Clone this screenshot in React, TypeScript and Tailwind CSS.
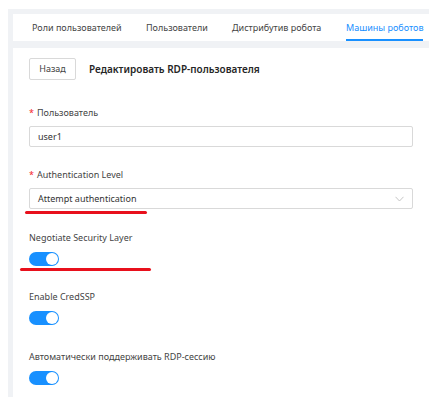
import React from "react";

const tabs = [
  { name: "Роли пользователей", w: "w-[114px]" },
  { name: "Пользователи", w: "w-[86px]" },
  { name: "Дистрибутив робота", w: "w-[114px]" },
  { name: "Машины роботов", w: "" },
];

const Toggle = () => (
  <div className="relative h-[14px] w-[30px] rounded-full bg-[#1890ff]">
    <span className="absolute right-[1px] top-[1px] h-[12px] w-[12px] rounded-full bg-white" />
  </div>
);

const Label = ({ text, required }: { text: string; required?: boolean }) => (
  <div className="flex h-[14px] items-center text-[9px] leading-[14px] text-[#444]">
    {required && <span className="mr-[3px] text-[#f5222d]">*</span>}
    {text}
  </div>
);

export default function App() {
  return (
    <div
      className="relative h-[409px] w-[444px] bg-white pl-[8px] pt-[9px]"
      style={{ fontFamily: '"Noto Sans", "Open Sans", sans-serif' }}
    >
      <div className="flex h-[388px] w-[421px] flex-col bg-[#f0f2f5] pl-[5px] pt-[5px]">
        <div className="flex h-[27px] items-stretch bg-white pl-[19px] text-[9px] text-[#444]">
          {tabs.map((t, i) => (
            <div key={t.name} className={`flex items-center ${t.w}`}>
              <span
                className={`relative flex h-full items-center whitespace-nowrap ${
                  i === 3 ? "text-[#1890ff]" : ""
                }`}
              >
                {t.name}
                {i === 3 && <span className="absolute bottom-0 left-0 right-0 h-[2px] bg-[#1890ff]" />}
              </span>
            </div>
          ))}
        </div>

        <div className="mt-[7px] flex-1 bg-white px-[16px] pt-[10px]">
          <div className="flex items-center">
            <button className="h-[22px] w-[47px] rounded-[2px] border border-[#d9d9d9] bg-white text-[9px] text-[#444]">
              Назад
            </button>
            <span className="ml-[13px] text-[10px] font-semibold text-[#262626]">Редактировать RDP-пользователя</span>
          </div>

          <div className="mt-[26px]">
            <Label text="Пользователь" required />
            <div className="mt-[6px] flex h-[21px] items-center rounded-[2px] border border-[#d9d9d9] px-[8px] text-[9px] text-[#333]">
              user1
            </div>
          </div>

          <div className="mt-[21px]">
            <Label text="Authentication Level" required />
            <div className="mt-[6px] flex h-[21px] items-center justify-between rounded-[2px] border border-[#d9d9d9] pl-[8px] pr-[8px] text-[9px] text-[#333]">
              <span>Attempt authentication</span>
              <svg width="9" height="6" viewBox="0 0 9 6" fill="none">
                <path d="M0.5 0.8 L4.5 5 L8.5 0.8" stroke="#c0c0c0" strokeWidth="0.9" />
              </svg>
            </div>
          </div>

          <div className="mt-[22px]">
            <Label text="Negotiate Security Layer" />
            <div className="mt-[7px]">
              <Toggle />
            </div>
          </div>

          <div className="mt-[24px]">
            <Label text="Enable CredSSP" />
            <div className="mt-[7px]">
              <Toggle />
            </div>
          </div>

          <div className="mt-[25px]">
            <Label text="Автоматически поддерживать RDP-сессию" />
            <div className="mt-[7px]">
              <Toggle />
            </div>
          </div>
        </div>
      </div>

      {/* annotation underlines */}
      <div className="absolute left-[25px] top-[211px] h-[3px] w-[122px] rounded-full bg-[#e8101c]" />
      <div className="absolute left-[20px] top-[268px] h-[3px] w-[131px] rounded-full bg-[#e8101c]" />
    </div>
  );
}
